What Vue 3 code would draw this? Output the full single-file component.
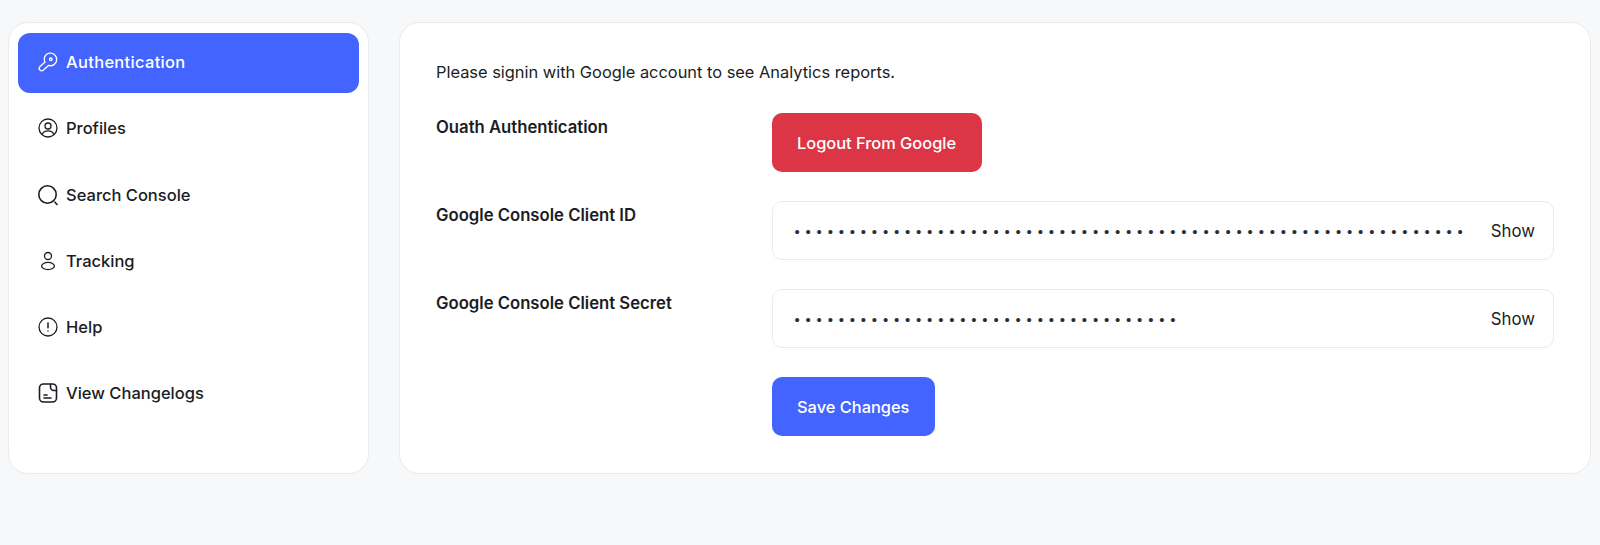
<script setup>
const menu = [
  { label: 'Authentication', icon: 'key', active: true },
  { label: 'Profiles', icon: 'profile' },
  { label: 'Search Console', icon: 'search' },
  { label: 'Tracking', icon: 'user' },
  { label: 'Help', icon: 'help' },
  { label: 'View Changelogs', icon: 'doc' },
]

const clientId = '•'.repeat(61)
const clientSecret = '•'.repeat(35)
</script>

<template>
  <div class="page">
    <aside class="sidebar">
      <a v-for="item in menu" :key="item.label" class="nav-item" :class="{ active: item.active }" href="#">
        <svg class="nav-icon" viewBox="0 0 20 20" fill="none" stroke="currentColor" stroke-width="1.3" stroke-linecap="round" stroke-linejoin="round">
          <template v-if="item.icon === 'key'">
            <path d="M6.800 10.200A6.300 6.300 0 1 1 10.500 13.400" />
            <path d="M6.800 10.200 1.700 14.800a2.500 2.500 0 0 0 3.500 3.500l5.300-4.900" />
            <circle cx="12.800" cy="7.300" r="1.300" />
          </template>
          <template v-else-if="item.icon === 'profile'">
            <circle cx="10" cy="10" r="9" />
            <circle cx="10" cy="8" r="3" />
            <path d="M4 16.600c1-2.700 3.400-3.800 6-3.800s5 1.100 6 3.800" />
          </template>
          <template v-else-if="item.icon === 'search'">
            <circle cx="9.500" cy="9.500" r="8.700" stroke-width="1.600" />
            <path d="M17 17.200l2 2.300" stroke-width="1.600" />
          </template>
          <template v-else-if="item.icon === 'user'">
            <circle cx="10" cy="5" r="3.500" />
            <ellipse cx="10" cy="15" rx="6.400" ry="3.600" />
          </template>
          <template v-else-if="item.icon === 'help'">
            <circle cx="10" cy="10" r="9" />
            <path d="M10 6v4.800M10 14v.1" stroke-width="1.500" />
          </template>
          <template v-else>
            <rect x="1.500" y="1" width="17" height="18" rx="4" stroke-width="1.600" />
            <path d="M12.500 1.500v2.500a3.500 3.500 0 0 0 3.500 3.500h2.500M6 12h3M6 15h7" stroke-width="1.600" />
          </template>
        </svg>
        <span>{{ item.label }}</span>
      </a>
    </aside>

    <main class="panel">
      <p class="intro">Please signin with Google account to see Analytics reports.</p>

      <div class="form">
        <label class="field-label">Ouath Authentication</label>
        <div><button class="btn btn-danger" type="button">Logout From Google</button></div>

        <label class="field-label">Google Console Client ID</label>
        <div class="input-box">
          <span class="secret">{{ clientId }}</span>
          <button class="show" type="button">Show</button>
        </div>

        <label class="field-label">Google Console Client Secret</label>
        <div class="input-box">
          <span class="secret">{{ clientSecret }}</span>
          <button class="show" type="button">Show</button>
        </div>

        <span></span>
        <div><button class="btn btn-primary" type="button">Save Changes</button></div>
      </div>
    </main>
  </div>
</template>

<style>
html,
body {
  margin: 0;
  background: #f7f8fa;
}
</style>

<style scoped>
.page {
  display: flex;
  gap: 30px;
  padding: 22px 9px 71px 8px;
  font-family: Inter, 'Noto Sans', sans-serif;
  color: #1a1d23;
}

.sidebar {
  box-sizing: border-box;
  flex: 0 0 361px;
  height: 452px;
  padding: 9.500px 9px 0;
  display: flex;
  flex-direction: column;
  gap: 6.300px;
  background: #fff;
  border: 1px solid #e9ebee;
  border-radius: 20px;
}

.nav-item {
  display: flex;
  align-items: center;
  gap: 8px;
  height: 59px;
  padding: 0 20px 1px;
  border-radius: 12px;
  font-size: 16.500px;
  font-weight: 450;
  color: #1a1d23;
  text-decoration: none;
}

.nav-item.active {
  background: #4364ff;
  color: #fff;
  letter-spacing: 0.300px;
}

.nav-icon {
  width: 20px;
  height: 20px;
  flex: none;
  overflow: visible;
}

.panel {
  box-sizing: border-box;
  flex: 1;
  height: 452px;
  padding: 37px 36px 0;
  background: #fff;
  border: 1px solid #e9ebee;
  border-radius: 20px;
}

.intro {
  margin: 0 0 29px;
  font-size: 16.400px;
  line-height: 24px;
  font-weight: 400;
}

.form {
  display: grid;
  grid-template-columns: 335.500px 1fr;
  row-gap: 28.800px;
}

.field-label {
  font-size: 16.700px;
  line-height: 28px;
  font-weight: 600;
}

.btn {
  height: 59.200px;
  padding: 0 24.500px;
  border: 1px solid transparent;
  border-radius: 10px;
  font-family: inherit;
  font-size: 16.400px;
  font-weight: 500;
  color: #fff;
}

.btn-danger {
  background: #dc3545;
}

.btn-primary {
  background: #4364ff;
}

.input-box {
  box-sizing: border-box;
  height: 59.200px;
  display: flex;
  align-items: center;
  justify-content: space-between;
  padding: 1px 18px 0 22px;
  border: 1px solid #e9ebee;
  border-radius: 10px;
}

.secret {
  font-family: 'Liberation Sans', sans-serif;
  font-size: 15px;
  letter-spacing: 5.800px;
  color: #2a2e35;
}

.show {
  padding: 0;
  border: 0;
  background: none;
  font-family: inherit;
  font-size: 16.800px;
  font-weight: 400;
  color: #1a1d23;
}
</style>
